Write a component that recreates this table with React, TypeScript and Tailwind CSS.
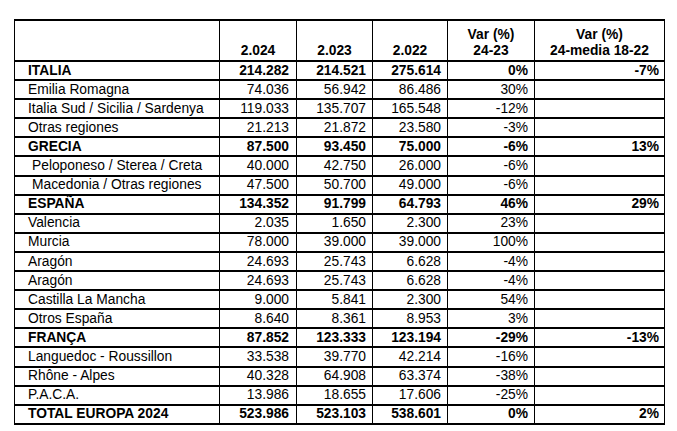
import React from "react";

type Row = { name: string; v: string[]; bold?: boolean; indent?: boolean };

const rows: Row[] = [
  { name: "ITALIA", v: ["214.282", "214.521", "275.614", "0%", "-7%"], bold: true },
  { name: "Emilia Romagna", v: ["74.036", "56.942", "86.486", "30%", ""] },
  { name: "Italia Sud / Sicilia / Sardenya", v: ["119.033", "135.707", "165.548", "-12%", ""] },
  { name: "Otras regiones", v: ["21.213", "21.872", "23.580", "-3%", ""] },
  { name: "GRECIA", v: ["87.500", "93.450", "75.000", "-6%", "13%"], bold: true },
  { name: "Peloponeso / Sterea / Creta", v: ["40.000", "42.750", "26.000", "-6%", ""], indent: true },
  { name: "Macedonia / Otras regiones", v: ["47.500", "50.700", "49.000", "-6%", ""], indent: true },
  { name: "ESPAÑA", v: ["134.352", "91.799", "64.793", "46%", "29%"], bold: true },
  { name: "Valencia", v: ["2.035", "1.650", "2.300", "23%", ""] },
  { name: "Murcia", v: ["78.000", "39.000", "39.000", "100%", ""] },
  { name: "Aragón", v: ["24.693", "25.743", "6.628", "-4%", ""] },
  { name: "Aragón", v: ["24.693", "25.743", "6.628", "-4%", ""] },
  { name: "Castilla La Mancha", v: ["9.000", "5.841", "2.300", "54%", ""] },
  { name: "Otros España", v: ["8.640", "8.361", "8.953", "3%", ""] },
  { name: "FRANÇA", v: ["87.852", "123.333", "123.194", "-29%", "-13%"], bold: true },
  { name: "Languedoc - Roussillon", v: ["33.538", "39.770", "42.214", "-16%", ""] },
  { name: "Rhône - Alpes", v: ["40.328", "64.908", "63.374", "-38%", ""] },
  { name: "P.A.C.A.", v: ["13.986", "18.655", "17.606", "-25%", ""] },
  { name: "TOTAL EUROPA 2024", v: ["523.986", "523.103", "538.601", "0%", "2%"], bold: true },
];

const cell = "border-x border-y-2 border-black";

export default function App() {
  return (
    <div
      className="w-[677px] h-[431px] bg-white pt-[19px] pl-[14px] text-black"
      style={{ fontFamily: '"Liberation Sans", Arial, sans-serif' }}
    >
      <table className="table-fixed border-collapse w-[650px] text-[13.8px] leading-none">
        <colgroup>
          <col className="w-[205px]" />
          <col className="w-[77px]" />
          <col className="w-[76px]" />
          <col className="w-[75px]" />
          <col className="w-[87px]" />
          <col className="w-[130px]" />
        </colgroup>
        <thead>
          <tr className="h-[41px] font-bold">
            <th className={cell}></th>
            <th className={cell + " align-bottom text-center pb-[2px]"}>2.024</th>
            <th className={cell + " align-bottom text-center pb-[2px]"}>2.023</th>
            <th className={cell + " align-bottom text-center pb-[2px]"}>2.022</th>
            <th className={cell + " align-bottom text-center pb-[1px] leading-[16px]"}>
              Var (%)
              <br />
              24-23
            </th>
            <th className={cell + " align-bottom text-center pb-[1px] leading-[16px]"}>
              Var (%)
              <br />
              24-media 18-22
            </th>
          </tr>
        </thead>
        <tbody>
          {rows.map((r, i) => (
            <tr key={i} className={"h-[19.1px] " + (r.bold ? "font-bold" : "font-normal")}>
              <td className={cell + " text-left whitespace-nowrap " + (r.indent ? "pl-[17px]" : "pl-[13px]")}>
                {r.name}
              </td>
              <td className={cell + " text-right pr-[7px]"}>{r.v[0]}</td>
              <td className={cell + " text-right pr-[6px]"}>{r.v[1]}</td>
              <td className={cell + " text-right pr-[6px]"}>{r.v[2]}</td>
              <td className={cell + " text-right pr-[6px]"}>{r.v[3]}</td>
              <td className={cell + " text-right pr-[5px]"}>{r.v[4]}</td>
            </tr>
          ))}
        </tbody>
      </table>
    </div>
  );
}
